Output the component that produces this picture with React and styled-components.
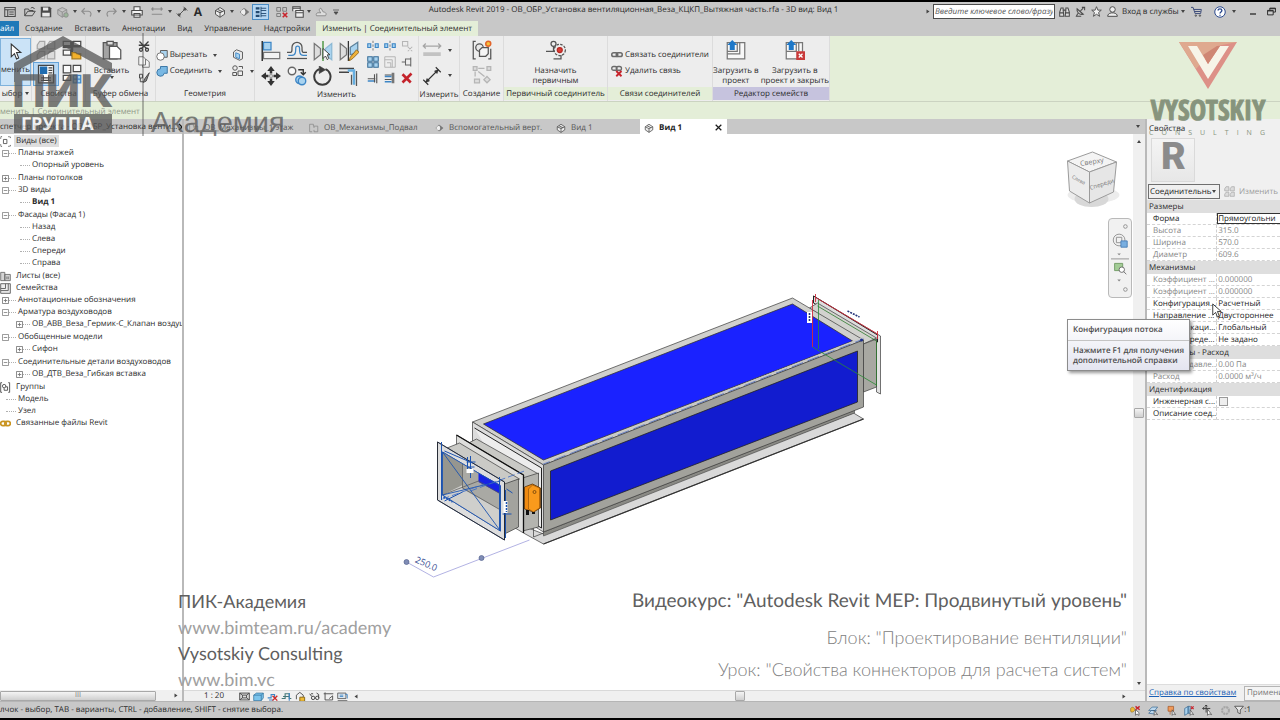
import React from 'react';
import styled, { createGlobalStyle } from 'styled-components';

const GlobalStyles = createGlobalStyle`
  * {
    box-sizing: border-box;
  }
  html {
    --grey: #c8c8c8;
    --green: #e4eed8;
    --panel: #ededed;
    --ink: #2b2b2b;
  }
  body {
    background: black;
    color: var(--ink);
    font-family: 'Open Sans', 'Noto Sans', sans-serif;
    font-size: 8px;
    line-height: 12px;
    margin: 0;
    overflow: hidden;
    text-rendering: geometricPrecision;
  }
  button, input, select {
    color: inherit;
    font: inherit;
    margin: 0;
    padding: 0;
    text-rendering: inherit;
  }
  ul {
    list-style: none;
    margin: 0;
    padding: 0;
  }
`;

const PageStyles = styled.div`
  background: white;
  border-bottom: 2px solid black;
  border-top: 2px solid black;
  display: flex;
  flex-direction: column;
  min-height: 100vh;
  overflow: hidden;
  position: relative;
`;

/* Icons, all drawn on a 16 unit grid */
const d = '#4a4a4a';
const b = '#3d86c6';
const lb = '#a9d3ef';
const g = '#b5b5b5';

const glyphs = {
  app: (
    <g fill="none" stroke={d} strokeWidth="1.4">
      <path d="M1 2h14v12H1zM1 5h14M5 5v9" />
      <path d="M7 8h6M7 11h6" />
    </g>
  ),
  open: (
    <path
      d="M1 13V4h5l1 2h5v2M1 13l4-6h10l-4 6zM9 3c2-2 4-1 5 1"
      fill="none"
      stroke={d}
      strokeWidth="1.3"
    />
  ),
  save: (
    <g>
      <path d="M1 1h12l2 2v12H1z" fill={d} />
      <path d="M4 2h7v4H4zM3 9h10v5H3z" fill="#e8e8e8" />
    </g>
  ),
  sync: (
    <g fill="#bcbcbc" stroke="#858585">
      <path d="M1 5l6-3 6 3v6l-6 4-6-4zM1 5l6 3 6-3M7 8v7" />
      <circle cx="12" cy="12" r="3" fill="#9cb59a" />
    </g>
  ),
  undo: (
    <path d="M5 3L1 7l4 4M1 7h9c4 0 4 5 2 7" fill="none" stroke="#8d8d8d" strokeWidth="1.5" />
  ),
  redo: (
    <path d="M11 3l4 4-4 4M15 7H6c-4 0-4 5-2 7" fill="none" stroke="#8d8d8d" strokeWidth="1.5" />
  ),
  print: (
    <g fill="#f4f4f4" stroke={d} strokeWidth="1.4">
      <path d="M4 1h8v5H4zM1 6h14v6H1zM4 10h8v5H4z" />
    </g>
  ),
  dim: (
    <g fill="none" stroke="#8a8a8a" strokeWidth="1.5">
      <path d="M1 4h14M3 2L1 4l2 2M13 2l2 2-2 2M1 11h14" />
    </g>
  ),
  measure: (
    <g fill={d} stroke={d} strokeWidth="1.2">
      <path d="M3 13L13 3M1 10l5 5M10 1l5 5" />
      <path d="M3 13l1-3 2 2zM13 3l-3 1 2 2z" />
    </g>
  ),
  cube: (
    <g fill="#ececec" stroke={d} strokeWidth="1.2">
      <path d="M2 6l6-4 6 4v5l-6 4-6-4zM2 6l6 3 6-3M8 9v6" />
      <path d="M5 4.500l6 3" />
    </g>
  ),
  section: (
    <g>
      <path d="M3 8l5-5 5 5-5 5z" fill="#eee" stroke="#777" strokeWidth="1.3" />
      <path d="M9 3l6 5-6 5z" fill="#777" />
      <circle cx="7" cy="8" r="3" fill="#eee" />
    </g>
  ),
  thin: (
    <g stroke="#234a70" fill="none">
      <path d="M1 3h5M1 8h5M1 13h5" strokeWidth="3" />
      <path d="M8 3h7M8 6h7M8 10h7M8 13h7M8 1v14" strokeWidth="1.2" />
    </g>
  ),
  closeWin: (
    <g fill="none" stroke="#777" strokeWidth="1.2">
      <path d="M1 2h5v5H1zM9 2h5v5H9zM1 10h5v4H1z" />
      <path d="M9 9l6 6M15 9l-6 6" stroke="#c8242c" strokeWidth="2.200" />
    </g>
  ),
  switchWin: (
    <g fill="#eee" stroke={d} strokeWidth="1.4">
      <path d="M1 7V1h10v4M1 3h10M5 6h10v9H5zM5 9h10" />
    </g>
  ),
  shape: (
    <path
      d="M2 13h12c2-3 0-5-3-5L8 3C4 3 6 8 8 9H4c-2 0-3 2-2 4z"
      fill="#ddd"
      stroke="#888"
      strokeWidth="1.2"
    />
  ),
  more: <path d="M2 4h12M4 8h8l-4 5z" fill={d} stroke={d} strokeWidth="1.5" />,
  binoculars: (
    <g fill="#ddd" stroke={d} strokeWidth="1.5">
      <path d="M3 3h3v3l1 9H1V9zM13 3h-3v3l-1 9h6V9z" />
      <path d="M6 6h4M1 10h6M9 10h6" />
    </g>
  ),
  dish: (
    <g fill="none" stroke={d} strokeWidth="1.5">
      <path d="M3 4c-1 5 3 9 9 8zM8 7l4-4M10 2h4v4M4 11l-2 4h7" />
    </g>
  ),
  star: (
    <path
      d="M8 1l2 5h5l-4 3.500 1.500 5.500L8 12l-4.500 3L5 9.500 1 6h5z"
      fill="#f2f2f2"
      stroke={d}
      strokeWidth="1.3"
    />
  ),
  user: (
    <g fill="#eee" stroke={d} strokeWidth="1.4">
      <path d="M1 15c0-3 2-4 5-5h4c3 1 5 2 5 5z" />
      <circle cx="8" cy="5" r="4" />
    </g>
  ),
  cart: (
    <g fill="none" stroke={d} strokeWidth="1.4">
      <path d="M0 2h3l3 9h8l1-6H4M5 8h9" stroke="#3a4a78" />
      <circle cx="7" cy="14" r="1" />
      <circle cx="13" cy="14" r="1" />
    </g>
  ),
  help: (
    <g>
      <circle cx="8" cy="8" r="7" fill="white" stroke="#27468c" strokeWidth="1.3" />
      <path
        d="M5.500 6c0-3 5-3 5 0 0 2-2.500 2-2.500 4M8 11.500v1.500"
        fill="none"
        stroke="#27468c"
        strokeWidth="1.800"
      />
    </g>
  ),
  min: <path d="M2 12h12" stroke="#222" strokeWidth="2.500" />,
  restore: (
    <g fill="none" stroke="#222" strokeWidth="1.6">
      <path d="M5 6V2h10v7h-4M1 6h10v8H1zM1 7h10M5 3h10" />
    </g>
  ),
  pointer: <path d="M4 1v12l3-3 2 5 2-1-2-5h4z" fill="white" stroke="#333" />,
  types: (
    <g fill="#dcdcdc" stroke="#a6a6a6">
      <path d="M1 4l2-3h4v6H1zM9 4l2-3h4v6H9zM1 12l2-3h4v6H1zM9 12l2-3h4v6H9z" />
    </g>
  ),
  typeProps: (
    <g stroke={d} fill="#f7f7f7">
      <path d="M1 1h6v5H1zM9 1h6v4H9zM1 8h6v4H1z" />
      <path d="M1 5h14M8 1v12" strokeWidth="2" />
      <path d="M8 10h3l1 1h3v4H8z" fill="#f2b12c" stroke="#a77a1c" />
    </g>
  ),
  props: (
    <g>
      <path d="M2 1h12v14H2z" fill="white" stroke="#444" />
      <path d="M3 2h6v6H3z" fill="#1f6cb0" />
      <path d="M10 3h3M10 5h3M10 7h3M4 11h8M4 13h8" stroke="#444" />
      <path d="M6 9v5M10 9v5" stroke="#444" strokeWidth=".7" />
    </g>
  ),
  family: (
    <g stroke={d} fill="#fafafa">
      <path d="M1 1h6v6H1zM9 1h6v5H9zM1 9h6v4H1z" />
      <path d="M9 9h6v6H9z" fill={lb} stroke={b} />
      <path d="M12 9v6M9 12h6" stroke={b} />
    </g>
  ),
  paste: (
    <g stroke="#555">
      <path d="M1 2h11v13H1z" fill="#a3a3a3" />
      <path d="M4 1h5v3H4z" fill="#ddd" />
      <path d="M6 5h6l3 3v7H6z" fill="white" />
    </g>
  ),
  cut: (
    <g fill="none" stroke="#3d3d3d" strokeWidth="1.7">
      <path d="M2 2l9 9M14 2l-9 9M1 7h14" />
      <circle cx="4" cy="13" r="2" />
      <circle cx="12" cy="13" r="2" />
    </g>
  ),
  copyClip: (
    <path
      d="M1 1h6l3 3v8H1zM10 5h2l3 3v7H6v-3"
      fill="#f5f5f5"
      stroke="#777"
      strokeWidth="1.3"
    />
  ),
  match: (
    <g stroke={d} strokeWidth="1.3">
      <path d="M2 3h4v5H2zM3 8v5h4" fill="#ddd" />
      <path d="M15 1L9 9l-2 5 4-2z" fill="#888" />
    </g>
  ),
  cutGeom: (
    <g strokeWidth="1.2">
      <path d="M6 2h9v9H6z" fill={lb} stroke="#555" />
      <circle cx="6" cy="10" r="5" fill="white" stroke="#666" />
    </g>
  ),
  joinGeom: (
    <path
      d="M6 2h9v9h-4a5 5 0 1 1-5-6z"
      fill="#79b8e3"
      stroke="#3b76a5"
      strokeWidth="1.3"
    />
  ),
  wall: (
    <g stroke="#555" strokeWidth="1.2">
      <path d="M2 4l4-3 8 3v9l-4 2-8-4z" fill="#e8e8e8" />
      <path d="M5 5l5 2v6l-5-2z" fill={lb} stroke={b} />
    </g>
  ),
  cope: (
    <g fill="#eee" stroke="#555" strokeWidth="1.3">
      <circle cx="4" cy="4" r="3" />
      <path d="M8 8h6v6H8zM1 10h5v4H1zM9 2h5v3" />
    </g>
  ),
  align: (
    <g>
      <path d="M1 0v16" stroke="#333" strokeWidth="1.2" />
      <path d="M2 1h6v6H2z" fill={lb} stroke={b} />
      <path d="M2 9h13v5H2z" fill="#f3f3f3" stroke="#777" />
    </g>
  ),
  offset: (
    <g fill="none">
      <path d="M0 9h3c1 0 1-1 1-4a4 4 0 0 1 8 0c0 3 0 4 1 4h3" stroke="#555" />
      <path d="M0 14h16" stroke="#555" />
      <path d="M1 11.500h3c3 0 3-3 3-6a1.500 1.500 0 0 1 3 0c0 3 0 6 3 6h3" stroke={b} />
    </g>
  ),
  mirrorPick: (
    <g>
      <path d="M1 2l5 4v5l-5 4z" fill="#ddd" stroke="#777" />
      <path d="M15 2l-5 4v5l5 4z" fill={lb} stroke="#8db9d5" />
      <path d="M8 0v16" stroke="#509848" strokeWidth="1.2" />
      <path d="M8 6v8l2-2 1.500 3 1-1-1-3h2z" fill="white" stroke="#333" strokeWidth=".7" />
    </g>
  ),
  mirrorDraw: (
    <g>
      <path d="M1 2l5 4v5l-5 4z" fill="#ddd" stroke="#777" />
      <path d="M15 1l-6 4v6l6-2z" fill={lb} stroke="#5b7f99" />
      <path d="M7.500 0v16" stroke="#333" />
      <path d="M14 7l-5 6-1 3 3-2 5-5z" fill="#f0b33a" stroke="#8a6420" strokeWidth=".7" />
    </g>
  ),
  move: (
    <g fill="#333">
      <path d="M8 0l3 4H9v2H7V4H5zM8 16l3-4H9v-2H7v2H5zM0 8l4-3v2h2v2H4v2zM16 8l-4-3v2h-2v2h2v2z" />
      <path d="M7 7h2v2H7z" fill="white" stroke="#666" strokeWidth=".6" />
    </g>
  ),
  copy: (
    <g fill="none" strokeWidth="1.1">
      <circle cx="4" cy="4" r="3" fill="#f8f8f8" stroke="#666" />
      <circle cx="10" cy="11" r="3" fill={lb} stroke={b} />
      <circle cx="12" cy="12" r="3" fill={lb} stroke={b} />
      <path d="M9 3h4v3M11 5l2 2 2-2" stroke="#333" />
    </g>
  ),
  rotate: (
    <g fill="none" stroke="#3c3c3c" strokeWidth="1.6">
      <path d="M5 2.500a6.500 6.500 0 1 0 5 0" />
      <path d="M5 0l5 3-5 3z" fill="#3c3c3c" strokeWidth=".5" />
    </g>
  ),
  trim: (
    <g fill="none">
      <path d="M0 2h12M0 5h8" stroke="#444" strokeWidth="1.2" />
      <path d="M7 3.500h5V15" stroke="#65aee0" strokeWidth="2" />
      <path d="M14 4v12M10 7v8" stroke="#555" />
    </g>
  ),
  split: (
    <g stroke={b} strokeWidth="1.5" fill={lb}>
      <path d="M1 5h4v5H1zM11 5h4v5h-4z" />
      <path d="M8 1v14" stroke="#888" strokeDasharray="3 2" />
    </g>
  ),
  array: (
    <path
      d="M1 1h6v6H1zM9 1h6v6H9zM1 9h6v6H1zM9 9h6v6H9z"
      fill={lb}
      stroke="#376c96"
      strokeWidth="1.4"
    />
  ),
  scale: <path d="M1 1h14v14H1zM1 5h10v10M4 9h5v6" fill="none" stroke={g} strokeWidth="1.3" />,
  pin: <path d="M1 8h5M6 4v8h7V4zM13 2v12" fill="#eee" stroke="#666" strokeWidth="1.4" />,
  unpin: <path d="M2 2h7v6H2zM9 9l6 6M15 9l-6 6" fill="none" stroke={g} strokeWidth="1.4" />,
  trimOne: (
    <g fill="none" stroke="#555" strokeWidth="1.5">
      <path d="M1 9h10M13 2v13" />
      <path d="M1 12h10" stroke={b} strokeWidth="2" />
      <path d="M10 3v11" />
    </g>
  ),
  trimMany: (
    <g fill="none" stroke="#555" strokeWidth="1.4">
      <path d="M1 4h9M1 10h9M13 1v14M11 1v14" />
      <path d="M1 6h9M1 13h9" stroke={b} strokeWidth="2" />
    </g>
  ),
  del: <path d="M2 3l11 11M14 2L2 14" stroke="#c4232b" strokeWidth="3.500" />,
  dimGrey: (
    <g stroke="#a5a5a5" fill="#c2c2c2">
      <path d="M1 4h14M3 2L1 4l2 2M13 2l2 2-2 2" fill="none" />
      <path d="M1 9h14v3H1z" stroke="none" />
    </g>
  ),
  dimLine: (
    <g stroke="#333" fill="#333">
      <path d="M3 13L13 3M1 11l4 4M11 1l4 4" fill="none" strokeWidth=".9" />
      <path d="M3 13l1-3 2 2zM13 3l-3 1 2 2z" strokeWidth=".5" />
    </g>
  ),
  create: (
    <g fill="none" stroke="#555">
      <path d="M3 1H1v14h2M13 15h2V7" />
      <circle cx="6" cy="6" r="3" fill="#e9e9e9" />
      <path d="M8 6h5v5l-2 2H6V8z" fill="#f5f5f5" />
      <circle cx="13" cy="3" r="2" fill="#f6c13a" stroke="#e2642a" strokeWidth="1.200" />
    </g>
  ),
  group: (
    <g fill="#ddd" stroke={g}>
      <path d="M1 2h3v3H1zM12 2h3v3h-3zM2 12h4v3H2zM12 10l2.500 2.500-2.500 2.500-2.500-2.500z" />
      <path d="M5 3.500h5M2.500 6v4M5 6l5 4" fill="none" />
    </g>
  ),
  primary: (
    <g fill="none" stroke="#555">
      <circle cx="6" cy="3" r="2" />
      <path d="M6 5v4H0M6 15h6v-3" />
      <circle cx="11" cy="8" r="4.500" strokeDasharray="2 1" />
      <circle cx="11" cy="8" r="2" fill="#dc3c35" stroke="#b42a24" />
    </g>
  ),
  link: (
    <g fill="none" stroke="#6b6b6b" strokeWidth="2">
      <rect x="1" y="5" width="8" height="5" rx="2.500" />
      <rect x="7" y="5" width="8" height="5" rx="2.500" />
    </g>
  ),
  unlink: (
    <g fill="none" stroke="#6b6b6b" strokeWidth="1.800">
      <rect x="1" y="2" width="7" height="5" rx="2.500" />
      <rect x="7" y="2" width="7" height="5" rx="2.500" />
      <path d="M7 8l7 7M14 8l-7 7" stroke="#c8242c" strokeWidth="2.500" />
    </g>
  ),
  load: (
    <g>
      <path d="M1 2h14v13H1z" fill="#f8f8f8" stroke="#777" />
      <path d="M9 2v7H1M11 2v9H1" fill="none" stroke="#777" />
      <path d="M5 0l4 4H7v4H3V4H1z" fill="#1e78c8" />
    </g>
  ),
  loadClose: (
    <g>
      <path d="M1 2h13v13H1z" fill="#f8f8f8" stroke="#777" />
      <path d="M9 2v7H1M11 2v7" fill="none" stroke="#777" />
      <path d="M5 0l4 4H7v4H3V4H1z" fill="#1e78c8" />
      <path d="M9 9h7v7H9z" fill="#c93a3a" />
      <path d="M11 11l3 3M14 11l-3 3" stroke="white" />
    </g>
  ),
  plan: <path d="M1 2h6v3h7v9H8v-3M1 2v12h4M8 5v3" fill="none" stroke="#888" strokeWidth="1.2" />,
  x: <path d="M3 3l10 10M13 3L3 13" stroke="#1c1c1c" strokeWidth="2.200" />,
  plus: <path d="M1 1h14v14H1zM4 8h8M8 4v8" fill="white" stroke="#777" strokeWidth="2" />,
  minus: <path d="M1 1h14v14H1zM4 8h8" fill="white" stroke="#888" strokeWidth="2" />,
  views: (
    <g fill="none" stroke="#555" strokeWidth="1.3">
      <path d="M1 4V1h3M12 1h3v3M1 12v3h3M12 15h3v-3" strokeDasharray="2 1" />
      <path d="M5 5h5v6H5z" />
    </g>
  ),
  sheets: (
    <g fill="#d5d5d5" stroke="#666" strokeWidth="1.2">
      <path d="M1 2h6v12H1zM7 5h8v9H7zM10 8v4M12 8v4" />
    </g>
  ),
  families: <path d="M1 1h14v14H1zM8 1v7H1M12 1v10H1" fill="#eee" stroke="#666" strokeWidth="1.4" />,
  groups: (
    <g fill="none" stroke="#555" strokeWidth="1.4">
      <path d="M3 1H1v14h2M12 1h2v14h-2" />
      <circle cx="6" cy="6" r="2.500" />
      <path d="M8 7h3v5H6V9" />
    </g>
  ),
  links: (
    <g fill="none" stroke="#c99420" strokeWidth="2.500">
      <rect x="1" y="5" width="8" height="6" rx="3" />
      <rect x="7" y="5" width="8" height="6" rx="3" />
    </g>
  ),
  detail: (
    <g fill="#ddd" stroke="#444" strokeWidth="1.3">
      <path d="M1 3h14v10H1zM5 6h6v4H5zM1 3l4 3M15 3l-4 3M1 13l4-3M15 13l-4-3" />
    </g>
  ),
  visual: <path d="M1 6l4-3h10v7l-3 4H1zM1 6h11v8M12 6l3-3" fill="#7cc4ec" stroke="#2c6c98" />,
  sunOff: (
    <g fill="none" stroke={b} strokeWidth="1.6">
      <path d="M1 10h5V5h5v5M3 13h6" />
      <path d="M8 7l7 7M15 7l-7 7" stroke="#cf2a2a" strokeWidth="2" />
    </g>
  ),
  crop: (
    <g fill="none" stroke="#477" strokeWidth="1.6">
      <path d="M1 11h5V4h6v7h3M3 8h9" />
      <path d="M12 3v11" stroke={b} />
    </g>
  ),
  lock: (
    <g strokeWidth="1.4">
      <path d="M2 12V6l5-4 5 4v3" fill="none" stroke="#555" />
      <path d="M7 9h7v6H7z" fill="#f0bb35" stroke="#8c6a18" />
    </g>
  ),
  glasses: (
    <g fill="none" stroke="#444" strokeWidth="1.4">
      <path d="M1 4l3 4M3 4h3M14 10V5l-3-2" />
      <circle cx="6" cy="10" r="2.500" />
      <circle cx="12" cy="10" r="2.500" />
    </g>
  ),
  reveal: <path d="M1 4h14M3 2v11h11V7L9 11" fill="none" stroke="#555" strokeWidth="1.4" />,
  screen: (
    <g stroke="#555" strokeWidth="1.2">
      <path d="M1 3h12v8H1zM1 14h14" fill="#dde6ee" />
      <path d="M4 6h5M4 8h5M12 5h3v6" fill="none" stroke={b} />
    </g>
  ),
  selLinks: (
    <g>
      <path d="M1 5c3-4 6 0 6 2s-5 5-6 2z" fill="#f0bb35" stroke="#9a7418" />
      <path d="M8 2l6 5M14 2L8 7" stroke="#c8242c" strokeWidth="2" />
      <path d="M8 7v8l2-2 3 2 0-4z" fill="white" stroke="#444" />
    </g>
  ),
  selUnder: (
    <g>
      <path d="M1 8l5-5h8l-4 5zM1 12l4-4h7l-3 5z" fill="#bcd8ee" stroke="#35658f" />
      <path d="M9 8v7l2-2 3 1z" fill="white" stroke="#444" />
    </g>
  ),
  selPin: (
    <g>
      <path d="M3 2h8v7H3zM6 9v5" fill="#f09a5a" stroke="#a05220" />
      <path d="M9 7v8l2-2 3 1z" fill="white" stroke="#444" />
    </g>
  ),
  selFace: (
    <g>
      <path d="M1 5l5-3v10l-5 3zM6 2h3v10H6z" fill={lb} stroke="#35658f" />
      <path d="M10 2l4 4M14 2l-4 4" stroke="#c8242c" strokeWidth="1.800" />
      <path d="M9 7v8l2-2 3 1z" fill="white" stroke="#444" />
    </g>
  ),
  drag: (
    <g>
      <path d="M6 0v11M1 5h11M4 2l2-2 2 2M3 3L1 5l2 2" stroke="#333" fill="none" strokeWidth="1.3" />
      <path d="M8 6v9l2-2 4 1z" fill="white" stroke="#444" />
    </g>
  ),
  gear: (
    <circle cx="8" cy="8" r="5" fill="none" stroke="#a5a5a5" strokeWidth="3" strokeDasharray="3 1" />
  ),
  filter: <path d="M1 2h14l-5 6v6l-4-2V8z" fill="#e8e8e8" stroke="#444" strokeWidth="1.3" />,
};

const IconStyles = styled.svg`
  display: block;
  flex: none;
  height: ${(props) => props.$size}px;
  width: ${(props) => props.$size}px;
`;

function Icon({ name, size = 12 }) {
  return (
    <IconStyles $size={size} viewBox="0 0 16 16" aria-hidden="true">
      {glyphs[name]}
    </IconStyles>
  );
}

const Arrow = styled.i`
  border: 2px solid transparent;
  border-bottom-width: 0;
  border-top: 3px solid #444;
  flex: none;
  height: 0;
  width: 0;
  transform: rotate(${(props) => props.$turn || 0}deg);
`;

/* Title bar */
const TitleBar = styled.header`
  align-items: center;
  background: var(--grey);
  display: flex;
  height: 19px;
  padding-left: 2px;
  h1 {
    align-self: flex-start;
    flex: 1;
    font-size: 8px;
    font-weight: 400;
    line-height: 15px;
    margin: 0;
    text-align: center;
    white-space: nowrap;
  }
`;

const ToolButton = styled.button`
  align-items: center;
  background: ${(props) => (props.$on ? '#b5d6f2' : 'transparent')};
  border: ${(props) => (props.$on ? '1px solid #4a8cc4' : '0')};
  display: flex;
  flex: none;
  font-size: 12px;
  font-weight: 700;
  height: 16px;
  justify-content: center;
  width: ${(props) => props.$w || 16}px;
`;

const Space = styled.span`
  flex: none;
  width: ${(props) => props.$w}px;
`;

const SearchBox = styled.input`
  background: white;
  border: 1px solid #4c4c4c;
  font-style: italic;
  height: 15px;
  margin-left: 3px;
  padding: 0 1px;
  width: 122px;
  &::placeholder {
    color: #555;
    opacity: 1;
  }
`;

const SignIn = styled.button`
  align-items: center;
  background: none;
  border: 0;
  display: flex;
  gap: 2px;
  white-space: nowrap;
  width: 64px;
`;

const quickTools = [
  ['app', 16],
  [null, 4],
  ['open', 16],
  ['save', 16],
  ['sync', 18],
  ['arrow', 6],
  ['undo', 18],
  ['arrow', 6],
  ['redo', 18],
  ['arrow', 8],
  ['print', 18],
  [null, 2],
  ['dim', 18],
  ['arrow', 7],
  ['measure', 18],
  ['text', 14],
  [null, 5],
  ['cube', 19],
  ['arrow', 6],
  ['section', 17],
  ['thin', 17],
  [null, 5],
  ['closeWin', 16],
  ['switchWin', 16],
  ['arrow', 5],
  ['shape', 20],
  ['more', 10],
];

function toolFace(name) {
  if (name === 'arrow') return <Arrow />;
  if (name === 'text') return 'A';
  return <Icon name={name} size={name === 'more' ? 8 : 12} />;
}

function Title() {
  return (
    <TitleBar>
      {quickTools.map(([name, w], i) =>
        name ? (
          <ToolButton key={i} $w={w} $on={name === 'thin'} aria-label={name}>
            {toolFace(name)}
          </ToolButton>
        ) : (
          <Space key={i} $w={w} />
        )
      )}
      <h1>
        Autodesk Revit 2019 - ОВ_ОБР_Установка вентиляционная_Веза_КЦКП_Вытяжная часть.rfa - 3D
        вид: Вид 1
      </h1>
      <Arrow $turn={-90} />
      <SearchBox placeholder="Введите ключевое слово/фразу" aria-label="Поиск" />
      <Space $w={1} />
      {['binoculars', 'dish', 'star', 'user'].map((name) => (
        <ToolButton key={name} aria-label={name}>
          <Icon name={name} size={11} />
        </ToolButton>
      ))}
      <Space $w={2} />
      <SignIn>
        Вход в службы <Arrow />
      </SignIn>
      <ToolButton $w={20} aria-label="cart">
        <Icon name="cart" size={11} />
      </ToolButton>
      <Space $w={4} />
      <ToolButton $w={20} aria-label="help">
        <Icon name="help" />
      </ToolButton>
      <ToolButton $w={8} aria-label="help menu">
        <Arrow />
      </ToolButton>
      <Space $w={6} />
      <ToolButton $w={18} aria-label="minimize">
        <Icon name="min" size={8} />
      </ToolButton>
      <ToolButton $w={18} aria-label="restore">
        <Icon name="restore" size={9} />
      </ToolButton>
    </TitleBar>
  );
}

/* Ribbon */
const TabRow = styled.nav`
  background: var(--grey);
  display: flex;
  height: 15px;
`;

const RibbonTab = styled.button`
  background: ${(props) => props.$bg || 'transparent'};
  border: 0;
  color: ${(props) => (props.$light ? 'white' : 'inherit')};
  line-height: 15px;
  padding: ${(props) => (props.$light ? '0 5px 0 0' : '0 6px')};
  white-space: nowrap;
`;

const RibbonStyles = styled.section`
  background: var(--green);
  border-bottom: 1px solid #cbd3c1;
  display: flex;
  height: 66px;
`;

const PanelStyles = styled.div`
  background: var(--panel);
  border-right: 1px solid #dcdcdc;
  display: flex;
  flex: none;
  flex-direction: column;
  width: ${(props) => props.$w}px;
  footer {
    align-items: center;
    background: ${(props) => props.$foot || 'transparent'};
    display: flex;
    gap: 3px;
    height: 13px;
    justify-content: center;
    line-height: 14px;
    margin-bottom: 1px;
    white-space: nowrap;
  }
`;

const PanelBody = styled.div`
  align-items: flex-start;
  display: flex;
  flex: 1;
  gap: ${(props) => props.$gap || 0}px;
  justify-content: center;
  padding: 2px 0 0 ${(props) => props.$pad || 0}px;
`;

const BigButton = styled.button`
  align-items: center;
  background: ${(props) => (props.$on ? '#cbe3f7' : 'transparent')};
  border: ${(props) => (props.$on ? '1px solid #7fb2dc' : '0')};
  display: flex;
  flex-direction: column;
  height: 48px;
  line-height: 10px;
  padding-top: ${(props) => (props.$on ? 4 : 2)}px;
  white-space: nowrap;
  svg {
    margin-bottom: ${(props) => (props.$on ? 5 : 6)}px;
  }
`;

const IconGrid = styled.div`
  display: grid;
  flex: none;
  grid-auto-rows: ${(props) => props.$row}px;
  grid-template-columns: repeat(${(props) => props.$cols}, ${(props) => props.$col}px);
`;

const GridButton = styled.button`
  align-items: center;
  background: ${(props) => (props.$on ? '#b9d9f4' : 'transparent')};
  border: ${(props) => (props.$on ? '1px solid #66a3d8' : '0')};
  display: flex;
  justify-content: center;
`;

const RowList = styled.div`
  display: flex;
  flex-direction: column;
  gap: 4px;
  padding-top: 11px;
`;

const RowButton = styled.button`
  align-items: center;
  background: none;
  border: 0;
  display: flex;
  gap: 2px;
  height: 12px;
  line-height: 14px;
  white-space: nowrap;
  i {
    margin-left: 4px;
  }
`;

const OptionsBar = styled.div`
  background: var(--green);
  color: #8f9788;
  height: 17px;
  line-height: 19px;
`;

function Panel({ title, w, foot, gap, pad, menu, children }) {
  return (
    <PanelStyles $w={w} $foot={foot}>
      <PanelBody $gap={gap} $pad={pad}>
        {children}
      </PanelBody>
      <footer>
        {title} {menu && <Arrow />}
      </footer>
    </PanelStyles>
  );
}

function Grid({ names, cols, col, row, size, on }) {
  return (
    <IconGrid $cols={cols} $col={col} $row={row}>
      {names.map((name, i) => (
        <GridButton key={i} $on={name === on} aria-label={name}>
          {name === 'arrow' ? <Arrow /> : <Icon name={name} size={size} />}
        </GridButton>
      ))}
    </IconGrid>
  );
}

function Ribbon() {
  return (
    <>
      <TabRow>
        <RibbonTab $bg="#1f79b8" $light>
          айл
        </RibbonTab>
        <RibbonTab>Создание</RibbonTab>
        <RibbonTab>Вставить</RibbonTab>
        <RibbonTab>Аннотации</RibbonTab>
        <RibbonTab>Вид</RibbonTab>
        <RibbonTab>Управление</RibbonTab>
        <RibbonTab>Надстройки</RibbonTab>
        <RibbonTab $bg="#e4eed8">Изменить | Соединительный элемент</RibbonTab>
      </TabRow>
      <RibbonStyles>
        <Panel title="ыбор" w={32} menu>
          <BigButton $on>
            <Icon name="pointer" size={17} />
            менить
          </BigButton>
        </Panel>
        <Panel title="Свойства" w={54}>
          <Grid
            names={['types', 'typeProps', 'props', 'family']}
            cols={2}
            col={26}
            row={24}
            size={20}
            on="props"
          />
        </Panel>
        <Panel title="Буфер обмена" w={70} gap={8} pad={4}>
          <BigButton>
            <Icon name="paste" size={20} />
            Вставить
            <Arrow />
          </BigButton>
          <Grid names={['cut', 'copyClip', 'match']} cols={1} col={14} row={16} size={12} />
        </Panel>
        <Panel title="Геометрия" w={99} gap={10}>
          <RowList>
            <RowButton>
              <Icon name="cutGeom" /> Вырезать <Arrow />
            </RowButton>
            <RowButton>
              <Icon name="joinGeom" /> Соединить <Arrow />
            </RowButton>
          </RowList>
          <RowList>
            <RowButton aria-label="wall">
              <Icon name="wall" />
            </RowButton>
            <RowButton aria-label="cope">
              <Icon name="cope" /> <Arrow />
            </RowButton>
          </RowList>
        </Panel>
        <Panel title="Изменить" w={164} gap={3}>
          <Grid
            names={['align', 'offset', 'mirrorPick', 'mirrorDraw', 'move', 'copy', 'rotate', 'trim']}
            cols={4}
            col={26}
            row={25}
            size={20}
          />
          <Grid
            names={[
              'split',
              'split',
              'unpin',
              'array',
              'scale',
              'pin',
              'trimOne',
              'trimMany',
              'del',
            ]}
            cols={3}
            col={17}
            row={16}
            size={12}
          />
        </Panel>
        <Panel title="Измерить" w={41} pad={4}>
          <Grid names={['dimGrey', 'arrow', 'dimLine', 'arrow']} cols={2} col={18} row={25} size={20} />
        </Panel>
        <Panel title="Создание" w={44}>
          <Grid names={['create', 'group']} cols={1} col={24} row={24} size={20} />
        </Panel>
        <Panel title="Первичный соединитель" w={104} foot="#e4eed8">
          <BigButton>
            <Icon name="primary" size={20} />
            <span>Назначить</span>
            <span>первичным</span>
          </BigButton>
        </Panel>
        <Panel title="Связи соединителей" w={105} foot="#e4eed8">
          <RowList>
            <RowButton>
              <Icon name="link" /> Связать соединители
            </RowButton>
            <RowButton>
              <Icon name="unlink" /> Удалить связь
            </RowButton>
          </RowList>
        </Panel>
        <Panel title="Редактор семейств" w={117} foot="#c6c3de" gap={2}>
          <BigButton>
            <Icon name="load" size={20} />
            <span>Загрузить в</span>
            <span>проект</span>
          </BigButton>
          <BigButton>
            <Icon name="loadClose" size={20} />
            <span>Загрузить в</span>
            <span>проект и закрыть</span>
          </BigButton>
        </Panel>
      </RibbonStyles>
      <OptionsBar>менить | Соединительный элемент</OptionsBar>
    </>
  );
}

/* Project browser */
const Workspace = styled.main`
  display: flex;
  flex: 1;
  min-height: 0;
`;

const BrowserStyles = styled.aside`
  border-right: 2px solid #b9b9b9;
  display: flex;
  flex: none;
  flex-direction: column;
  overflow: hidden;
  width: 184px;
  > header {
    align-items: center;
    background: var(--grey);
    display: flex;
    height: 15px;
    justify-content: space-between;
    line-height: 19px;
    padding-right: 2px;
    white-space: nowrap;
  }
`;

const Tree = styled.ul`
  flex: 1;
  padding-top: 1px;
  white-space: nowrap;
  ul {
    padding-left: 2px;
  }
  ul ul {
    margin-bottom: 1px;
    padding-left: 14px;
  }
`;

const TreeRow = styled.div`
  align-items: center;
  display: flex;
  font-weight: ${(props) => (props.$bold ? 700 : 400)};
  gap: ${(props) => (props.$top ? 3 : 0)}px;
  height: 12px;
  span {
    background: ${(props) => (props.$picked ? '#dedede' : 'transparent')};
    padding: 0 2px;
  }
`;

const Toggle = styled.button`
  background: none;
  border: 0;
  flex: none;
`;

const Dash = styled.i`
  border-top: 1px dotted #b0b0b0;
  flex: none;
  margin-left: ${(props) => (props.$alone ? 4 : 0)}px;
  width: ${(props) => (props.$alone ? 10 : 7)}px;
`;

const tree = [
  {
    icon: 'views',
    label: 'Виды (все)',
    picked: true,
    items: [
      { label: 'Планы этажей', sign: 'minus', items: [{ label: 'Опорный уровень' }] },
      { label: 'Планы потолков', sign: 'plus' },
      { label: '3D виды', sign: 'minus', items: [{ label: 'Вид 1', bold: true }] },
      {
        label: 'Фасады (Фасад 1)',
        sign: 'minus',
        items: [
          { label: 'Назад' },
          { label: 'Слева' },
          { label: 'Спереди' },
          { label: 'Справа' },
        ],
      },
    ],
  },
  { icon: 'sheets', label: 'Листы (все)' },
  {
    icon: 'families',
    label: 'Семейства',
    items: [
      { label: 'Аннотационные обозначения', sign: 'plus' },
      {
        label: 'Арматура воздуховодов',
        sign: 'minus',
        items: [{ label: 'ОВ_АВВ_Веза_Гермик-С_Клапан воздушный', sign: 'plus' }],
      },
      { label: 'Обобщенные модели', sign: 'minus', items: [{ label: 'Сифон', sign: 'plus' }] },
      {
        label: 'Соединительные детали воздуховодов',
        sign: 'minus',
        items: [{ label: 'ОВ_ДТВ_Веза_Гибкая вставка', sign: 'plus' }],
      },
    ],
  },
  { icon: 'groups', label: 'Группы', items: [{ label: 'Модель' }, { label: 'Узел' }] },
  { icon: 'links', label: 'Связанные файлы Revit' },
];

function TreeNode({ node }) {
  return (
    <li>
      <TreeRow $top={!!node.icon} $bold={node.bold} $picked={node.picked}>
        {node.icon && <Icon name={node.icon} size={11} />}
        {node.sign && (
          <Toggle aria-label={node.sign}>
            <Icon name={node.sign} size={7} />
          </Toggle>
        )}
        {!node.icon && <Dash $alone={!node.sign} />}
        <span>{node.label}</span>
      </TreeRow>
      {node.items && (
        <ul>
          {node.items.map((item) => (
            <TreeNode key={item.label} node={item} />
          ))}
        </ul>
      )}
    </li>
  );
}

const ScrollRow = styled.div`
  align-items: center;
  background: #f0f0f0;
  display: flex;
  flex: ${(props) => (props.$fill ? 1 : 'none')};
  height: 11px;
  justify-content: space-between;
  padding: 0 4px 0 ${(props) => (props.$fill ? 4 : 0)}px;
`;

const Thumb = styled.span`
  background: linear-gradient(#f4f4f4, #cfcfcf);
  border: 1px solid #a8a8a8;
  border-radius: 1px;
  color: #777;
  font-size: 7px;
  height: 10px;
  line-height: 8px;
  text-align: center;
  width: ${(props) => props.$w}px;
`;

function Browser() {
  return (
    <BrowserStyles>
      <header>
        спетчер проекта - ОВ_ОБР_Установка венти...
        <Icon name="x" size={10} />
      </header>
      <Tree>
        {tree.map((node) => (
          <TreeNode key={node.label} node={node} />
        ))}
      </Tree>
      <ScrollRow>
        <Thumb $w={156}>III</Thumb>
        <Arrow $turn={-90} />
      </ScrollRow>
    </BrowserStyles>
  );
}

/* Drawing area */
const ViewStyles = styled.section`
  display: flex;
  flex: 1;
  flex-direction: column;
  min-width: 0;
`;

const DocTabs = styled.nav`
  align-items: center;
  background: var(--grey);
  display: flex;
  height: 15px;
  padding-right: 5px;
  > i {
    margin-left: auto;
  }
`;

const DocTab = styled.button`
  align-items: center;
  background: ${(props) => (props.$active ? 'white' : 'transparent')};
  border: 0;
  color: ${(props) => (props.$active ? '#222' : '#555')};
  display: flex;
  font-weight: ${(props) => (props.$active ? 700 : 400)};
  gap: 5px;
  height: 15px;
  line-height: 14px;
  padding: 2px 4px 0 ${(props) => (props.$active ? 4 : 5)}px;
  white-space: nowrap;
  width: ${(props) => props.$w}px;
  span {
    flex: 1;
    text-align: left;
  }
`;

const Stage = styled.div`
  display: flex;
  flex: 1;
  min-height: 0;
  position: relative;
  > svg {
    display: block;
    flex: 1;
    height: 556px;
    min-width: 0;
  }
`;

const VScroll = styled.div`
  align-items: center;
  background: #f0f0f0;
  display: flex;
  flex: none;
  flex-direction: column;
  justify-content: space-between;
  padding: 6px 0 5px;
  width: 12px;
`;

const NavBar = styled.div`
  background: #f1f1f1;
  border: 1px solid #b9b9b9;
  border-radius: 4px;
  height: 80px;
  padding: 2px;
  position: absolute;
  right: 13px;
  top: 84px;
  width: 24px;
  svg {
    display: block;
    height: 100%;
    width: 100%;
  }
`;

const ViewBar = styled.footer`
  align-items: center;
  background: #f0f0f0;
  border-top: 1px solid #d9d9d9;
  display: flex;
  height: 11px;
  padding: 0 15px 0 20px;
  > span {
    flex: none;
    width: 34px;
  }
`;

const ViewTool = styled.button`
  background: none;
  border: 0;
  flex: none;
  padding: 0 1px;
  width: 14px;
`;

const edge = { stroke: '#3a3a3a', strokeWidth: 0.7 };

function Model() {
  return (
    <g strokeLinejoin="round">
      {/* far flange and duct */}
      <path d="M813 296l67 40v58l-4-2v-52l-63-37z" fill="#e2e2e2" {...edge} />
      <path d="M813 296l64 39v7l-64-39z" fill="#dedede" stroke="#222" strokeWidth="1" />
      <path d="M809 308l8-5 59 35-13 6z" fill="#d2d2ce" {...edge} />
      <path d="M863 344l13-5v48l-13 5z" fill="#a8a8a2" {...edge} />
      <path d="M817 306l59 35v45" fill="none" stroke="#2d7a2d" strokeWidth=".8" />
      {/* base rail */}
      <path d="M523 526l20 8 310-121 10 6-320 125-20-11z" fill="#d9d9d9" {...edge} />
      <path d="M543 544l320-125" stroke="#333" strokeWidth="1.2" />
      <path d="M543 532l311-122v3L543 536z" fill="#8a8a85" stroke="#444" strokeWidth=".6" />
      <path d="M533 527v10l10-4" fill="none" {...edge} />
      {/* body top */}
      <path d="M472 422l320-124 71 42-320 125z" fill="#d0d0cd" {...edge} />
      <path d="M483 424l309-120 60 37-309 119z" fill="#1a22ff" stroke="#333" strokeWidth=".8" />
      {/* body front */}
      <path d="M543 465l320-125v67L543 532z" fill="#a2a29c" {...edge} />
      <path d="M550 471l307-120v51L550 520z" fill="#121ccf" stroke="#222" strokeWidth=".8" />
      <path d="M543 463l320-125" stroke="#c9c9c9" strokeWidth="2" />
      <path d="M538 466l325-127" stroke="#4a68b8" strokeWidth=".8" strokeDasharray="12 5" />
      {/* body near end */}
      <path d="M472 422l71 43v67l-71-44z" fill="#dcdcdc" {...edge} />
      <path d="M474 428l67 40v60l-13-8" fill="#ededed" stroke="#222" strokeWidth="1" />
      {/* duct between end and plate */}
      <path d="M462 446l14-7 62 35-13 6z" fill="#c9c9c5" {...edge} />
      <path d="M522 478l16-5v54l-16 4z" fill="#b4b4af" {...edge} />
      {/* middle plate */}
      <path d="M456 435l67 40v58l-67-40z" fill="#dededc" {...edge} />
      <path d="M456 435l67 40v58" fill="none" stroke="#111" strokeWidth="1.3" />
      {/* front duct */}
      <path d="M444 449l15-6 60 36-14 6z" fill="#cacac6" {...edge} />
      <path d="M504 484l14-5v48l-14 7z" fill="#a3a39e" {...edge} />
      {/* front flange */}
      <path
        d="M437 442l67 40v58l-67-40zM442 452v43l58 36v-45z"
        fill="#dedede"
        fillRule="evenodd"
        stroke="#2e4780"
        strokeWidth=".9"
      />
      <path d="M442 452l58 34v45l-58-36z" fill="#cfcfcc" />
      <path d="M442 452l20 12v21l-20 10z" fill="#96968f" />
      <path d="M462 464l38 22v24l-38-21z" fill="#a9a9a4" />
      <path d="M478 473l22 12v9l-22-12z" fill="#1722e6" />
      <path d="M442 495l36-14 22 13M462 464v24l38 22" fill="none" stroke="#555" strokeWidth=".7" />
      <path d="M437 442l67 40v58l-67-40z" fill="none" stroke="#222" strokeWidth=".8" />
      <path
        d="M442 452l58 34v45l-58-36zM442 452l58 79M442 495l58-14"
        fill="none"
        stroke="#1c53b0"
        strokeWidth=".9"
      />
      <path
        d="M441 442v58M444 451l28 12M470 456v22M466 462h9M467 467h7M467 457v13M499 477v54M505 490v48M502 514h9M444 501l18-9M506 489l6 4"
        stroke="#1c53b0"
        strokeWidth="1"
      />
      <path d="M505 501v12M466 471h7" stroke="white" strokeWidth="4" />
      <path d="M506 502v10M443 497l9 5" stroke="#1c53b0" strokeWidth="1.5" strokeDasharray="2 1" />
      <path d="M470 491l54-20M442 499l42-15" stroke="#3b6bc5" strokeWidth=".8" strokeDasharray="7 3" />
      {/* actuator */}
      <path d="M524 487l8-3 8 4v20l-7 4-9-3z" fill="#f08a10" stroke="#5c3508" strokeWidth=".8" />
      <path d="M528 489l4-4 7 3v20l-6 4-5-3z" fill="#f99a1c" stroke="#8a4b06" strokeWidth=".6" />
      <circle cx="534" cy="492" r="1.500" fill="none" stroke="#5c3508" strokeWidth=".7" />
      <path d="M527 510v5M533 512v2" stroke="#111" strokeWidth="3" />
      {/* connector axes at the far end */}
      <path d="M816 298l61 36M812 300v47M815 294v8M877 331v8" stroke="#d22b3b" strokeWidth=".9" />
      <path d="M818 300v49M812 347l64 38" stroke="#2a8a35" strokeWidth=".8" />
      <path d="M809 312v11" stroke="white" strokeWidth="5" />
      <path d="M809 313v9M847 311l12 6" stroke="#26357a" strokeWidth="1.6" strokeDasharray="2 1" />
      <circle cx="861" cy="340" r="1.500" fill="#1c2f8f" />
      {/* dimension */}
      <path d="M406 562l27 15 96-37" fill="none" stroke="#a9a9e0" strokeWidth=".9" />
      <circle cx="406" cy="562" r="2.500" fill="#7f8cb5" stroke="#56648f" strokeWidth=".7" />
      <circle cx="481" cy="558" r="2.500" fill="#7f8cb5" stroke="#56648f" strokeWidth=".7" />
      <text x="414" y="562" transform="rotate(24 414 562)" fontSize="9" fill="#3b4f93">
        250.0
      </text>
    </g>
  );
}

function ViewCube() {
  return (
    <g>
      <ellipse cx="1093" cy="195" rx="26" ry="8" fill="#ececec" />
      <ellipse cx="1091" cy="199" rx="17" ry="8" fill="#d8d8d8" />
      <path d="M1067 161l25-9 24 10-27 10z" fill="#f4f4f4" stroke="#9b9b9b" />
      <path d="M1067 161l22 11v31l-20-12z" fill="#ececec" stroke="#9b9b9b" />
      <path d="M1089 172l27-10-3 30-24 11z" fill="#e6e6e6" stroke="#9b9b9b" />
      <g fill="#777">
        <text x="1080" y="166" transform="rotate(-9 1080 166)" fontSize="7">
          Сверху
        </text>
        <text x="1071" y="178" transform="rotate(28 1071 178)" fontSize="5">
          Слева
        </text>
        <text x="1090" y="190" transform="rotate(-18 1090 190)" fontSize="6">
          Спереди
        </text>
      </g>
    </g>
  );
}

const docs = [
  ['plan', 'ОВ_Механизмы_1 этаж', 120],
  ['plan', 'ОВ_Механизмы_Подвал', 125],
  ['section', 'Вспомогательный верт.', 122],
  ['cube', 'Вид 1', 89],
];

const viewTools = [
  'detail',
  'visual',
  'sunOff',
  'crop',
  'lock',
  'glasses',
  'reveal',
  'screen',
];

function View() {
  return (
    <ViewStyles>
      <DocTabs>
        {docs.map(([icon, label, w]) => (
          <DocTab key={label} $w={w}>
            <Icon name={icon} size={10} />
            <span>{label}</span>
          </DocTab>
        ))}
        <DocTab $w={87} $active>
          <Icon name="cube" size={10} />
          <span>Вид 1</span>
          <Icon name="x" size={9} />
        </DocTab>
        <Arrow />
      </DocTabs>
      <Stage>
        <svg viewBox="184 134 948 556" role="img" aria-label="3D вид">
          <Model />
          <ViewCube />
        </svg>
        <NavBar>
          <svg viewBox="0 0 20 74" aria-hidden="true">
            <g fill="none" stroke="#8d8d8d">
              <circle cx="16" cy="2" r="2" />
              <circle cx="16" cy="72" r="2" />
              <circle cx="9" cy="17" r="6.500" />
              <path d="M6 14h6v6H6zM0 38h20" />
              <path d="M11 18h7v7h-7z" fill="#78aee0" stroke="#4a7fb5" />
              <path d="M4 43h9v8H4z" fill="#a3cc96" stroke="#6f9a63" />
              <circle cx="12" cy="50" r="3" fill="white" stroke="#666" />
              <path d="M14 52l3 3" stroke="#666" />
            </g>
            <path d="M7 32h4l-2 2zM7 61h4l-2 2z" fill="#888" />
          </svg>
        </NavBar>
        <VScroll>
          <Arrow $turn={180} />
          <Thumb $w={10} />
          <Arrow />
        </VScroll>
      </Stage>
      <ViewBar>
        <span>1 : 20</span>
        {viewTools.map((name) => (
          <ViewTool key={name} aria-label={name}>
            <Icon name={name} size={11} />
          </ViewTool>
        ))}
        <ScrollRow $fill>
          <Arrow $turn={90} />
          <Thumb $w={10} />
          <Arrow $turn={-90} />
        </ScrollRow>
      </ViewBar>
    </ViewStyles>
  );
}

/* Properties */
const PropsStyles = styled.aside`
  background: white;
  border-left: 2px solid #b9b9b9;
  display: flex;
  flex: none;
  flex-direction: column;
  overflow: hidden;
  width: 135px;
  > header {
    background: #f0f0f0;
    height: 64px;
    line-height: 19px;
    padding-left: 2px;
  }
  > footer {
    align-items: center;
    background: #f0f0f0;
    border-top: 1px solid #ddd;
    display: flex;
    height: 17px;
    justify-content: space-between;
    margin-top: auto;
    padding-left: 2px;
    white-space: nowrap;
  }
  a {
    color: #1c5fb4;
  }
`;

const Preview = styled.div`
  background: linear-gradient(#f4f4f4, #e7e7e7);
  border: 1px solid #dadada;
  color: #8b8b8b;
  font: 900 38px/36px Roboto, sans-serif;
  height: 44px;
  margin-left: 2px;
  padding-left: 9px;
  width: 44px;
`;

const TypeRow = styled.div`
  align-items: center;
  background: #f0f0f0;
  color: #9c9c9c;
  display: flex;
  gap: 4px;
  height: 17px;
  padding-left: 1px;
  white-space: nowrap;
`;

const TypeSelect = styled.label`
  align-items: center;
  border: 1px solid #6f6f6f;
  display: flex;
  height: 15px;
  padding-right: 3px;
  width: 72px;
  select {
    appearance: none;
    background: none;
    border: 0;
    color: #222;
    flex: 1;
    min-width: 0;
    overflow: hidden;
    padding-left: 1px;
  }
`;

const PropTable = styled.table`
  border-collapse: separate;
  border-spacing: 0;
  table-layout: fixed;
  width: 100%;
  th,
  td {
    border-bottom: 1px dashed #d4d4d4;
    font-weight: 400;
    height: 12px;
    line-height: 11px;
    overflow: hidden;
    padding: 0;
    text-align: left;
    white-space: nowrap;
  }
  td {
    border-left: 1px dashed #cfcfcf;
    padding-left: 1px;
  }
  th {
    padding-left: 6px;
  }
`;

const GroupHead = styled.tr`
  background: #dedede;
  th {
    border-bottom: 0;
    height: 13px;
    line-height: 13px;
    padding-left: 2px;
  }
`;

const PropRow = styled.tr`
  color: ${(props) => (props.$dim ? '#858585' : '#222')};
  td {
    box-shadow: ${(props) => (props.$boxed ? 'inset 1px 1px 0 #333, inset 0 -1px 0 #333' : 'none')};
  }
  input {
    appearance: none;
    background: #eee;
    border: 1px solid #999;
    display: block;
    height: 9px;
    margin-left: 1px;
    width: 9px;
  }
`;

const ApplyButton = styled.button`
  background: #f4f4f4;
  border: 1px solid #b5b5b5;
  border-right: 0;
  color: #777;
  height: 15px;
  padding-left: 2px;
  text-align: left;
  width: 36px;
`;

const groups = [
  {
    title: 'Размеры',
    rows: [
      ['Форма', 'Прямоугольни'],
      ['Высота', '315.0', true],
      ['Ширина', '570.0', true],
      ['Диаметр', '609.6', true],
    ],
  },
  {
    title: 'Механизмы',
    rows: [
      ['Коэффициент ...', '0.000000', true],
      ['Коэффициент ...', '0.000000', true],
      ['Конфигурация...', 'Расчетный'],
      ['Направление ...', 'Двустороннее'],
      ['Классификаци...', 'Глобальный'],
      ['Метод опреде...', 'Не задано'],
    ],
  },
  {
    title: 'Механизмы - Расход',
    rows: [
      ['Падение давле...', '0.00 Па', true],
      ['Расход', '0.0000 м³/ч', true],
    ],
  },
  {
    title: 'Идентификация',
    rows: [
      ['Инженерная с...', null],
      ['Описание соед...', ''],
    ],
  },
];

const PropCol = styled.col`
  width: ${(props) => props.$w};
`;

function Properties() {
  return (
    <PropsStyles>
      <header>
        Свойства
        <Preview>R</Preview>
      </header>
      <TypeRow>
        <TypeSelect>
          <select aria-label="Тип">
            <option>Соединительнь</option>
          </select>
          <Arrow />
        </TypeSelect>
        <Icon name="types" size={11} />
        Изменить т
      </TypeRow>
      <PropTable>
        <colgroup>
          <PropCol $w="52%" />
          <PropCol $w="48%" />
        </colgroup>
        <tbody>
          {groups.map((group) => (
            <React.Fragment key={group.title}>
              <GroupHead>
                <th colSpan="2">{group.title}</th>
              </GroupHead>
              {group.rows.map(([label, value, dim], i) => (
                <PropRow key={i} $dim={dim} $boxed={label === 'Форма'}>
                  <th scope="row">{label}</th>
                  <td>{value === null ? <input type="checkbox" aria-label={label} /> : value}</td>
                </PropRow>
              ))}
            </React.Fragment>
          ))}
        </tbody>
      </PropTable>
      <footer>
        <a href="#help">Справка по свойствам</a>
        <ApplyButton>Примени</ApplyButton>
      </footer>
    </PropsStyles>
  );
}

/* Overlays */
const Tooltip = styled.div`
  background: linear-gradient(white, #e4e5f0);
  border: 1px solid #8c8c8c;
  box-shadow: 2px 2px 3px rgba(0, 0, 0, 0.4);
  color: #4c4c4c;
  font-weight: 600;
  height: 52px;
  line-height: 10px;
  position: absolute;
  right: 90px;
  top: 317px;
  white-space: nowrap;
  width: 123px;
  p {
    margin: 0;
    padding: 5px;
  }
  p + p {
    border-top: 1px solid #c4c4c4;
  }
`;

const Cursor = styled.div`
  position: absolute;
  right: 56px;
  top: 301px;
`;

const PikMark = styled.div`
  left: 14px;
  opacity: 0.75;
  pointer-events: none;
  position: absolute;
  top: 28px;
  svg {
    display: block;
    height: 106px;
    width: 290px;
  }
`;

const VysMark = styled.div`
  color: #87947d;
  pointer-events: none;
  position: absolute;
  right: 8px;
  top: 38px;
  width: 128px;
  svg {
    display: block;
    height: 50px;
    margin: 0 auto;
    width: 60px;
  }
  strong {
    display: block;
    font: 700 28px/28px 'Liberation Sans Narrow', 'Open Sans Condensed', 'Roboto Condensed',
      'Liberation Sans', sans-serif;
    margin-top: 6px;
    text-align: center;
    -webkit-text-stroke: 1px #87947d;
  }
  p {
    display: flex;
    font-size: 7px;
    justify-content: space-between;
    line-height: 8px;
    margin: 6px 7px 0 5px;
  }
`;

const Credits = styled.div`
  bottom: ${(props) => props.$bottom}px;
  color: ${(props) => (props.$right ? '#808080' : '#a0a0a0')};
  font-family: Lato, 'Open Sans', sans-serif;
  font-size: 18px;
  font-weight: ${(props) => (props.$right ? 300 : 400)};
  left: ${(props) => (props.$right ? 'auto' : '178px')};
  line-height: 26px;
  pointer-events: none;
  position: absolute;
  right: ${(props) => (props.$right ? '153px' : 'auto')};
  text-align: ${(props) => (props.$right ? 'right' : 'left')};
  white-space: nowrap;
  p {
    margin: 0;
  }
  p + p {
    margin-top: ${(props) => (props.$right ? 6 : 0)}px;
  }
  .dark {
    color: #5f5f5f;
    font-weight: 400;
  }
  .course {
    font-size: 19px;
    margin-bottom: 10px;
  }
`;

const StatusBar = styled.footer`
  align-items: center;
  background: var(--grey);
  border-top: 1px solid #b5b5b5;
  display: flex;
  height: 17px;
  padding-right: 29px;
  > span:first-child {
    flex: 1;
    line-height: 20px;
  }
`;

function Marks() {
  return (
    <>
      <PikMark>
        <svg viewBox="14 30 290 106">
          <path d="M14 64v-1l49-27 49 27v10L63 46 20 69v13h-6z" fill="#555" />
          <text
            x="12"
            y="107"
            fontFamily="Inter, sans-serif"
            fontSize="45"
            fontWeight="800"
            fill="#555"
          >
            ПИК
          </text>
          <path d="M14 114h98v19H14z" fill="#555" />
          <text x="21" y="130" fontSize="18" fontWeight="700" fill="white">
            ГРУППА
          </text>
          <path d="M143 33v103" stroke="#444" />
          <text x="151" y="132" fontFamily="Liberation Sans, sans-serif" fontSize="29" fill="#555">
            Академия
          </text>
        </svg>
      </PikMark>
      <VysMark>
        <svg viewBox="1178 39 60 50">
          <path d="M1179 41h58l-29 47z" fill="#dd9087" />
          <path d="M1179 41h58l-20 4-21 23z" fill="#dfa98f" />
          <path d="M1188 45h9l11 18 12-18h9l-21 33z" fill="#f7f4e8" />
          <path d="M1203 54l14-9h3l-12 18z" fill="#cf8673" />
        </svg>
        <strong>VYSOTSKIY</strong>
        <p>
          {'CONSULTING'.split('').map((letter, i) => (
            <span key={i}>{letter}</span>
          ))}
        </p>
      </VysMark>
      <Credits $bottom={26}>
        <p className="dark">ПИК-Академия</p>
        <p>www.bimteam.ru/academy</p>
        <p className="dark">Vysotskiy Consulting</p>
        <p>www.bim.vc</p>
      </Credits>
      <Credits $right $bottom={36}>
        <p className="dark course">Видеокурс: "Autodesk Revit MEP: Продвинутый уровень"</p>
        <p>Блок: "Проектирование вентиляции"</p>
        <p>Урок: "Свойства коннекторов для расчета систем"</p>
      </Credits>
    </>
  );
}

export default function App() {
  return (
    <PageStyles>
      <GlobalStyles />
      <Title />
      <Ribbon />
      <Workspace>
        <Browser />
        <View />
        <Properties />
      </Workspace>
      <StatusBar>
        <span>лчок - выбор, TAB - варианты, CTRL - добавление, SHIFT - снятие выбора.</span>
        {['selLinks', 'selUnder', 'selPin', 'selFace', 'drag', 'gear'].map((name) => (
          <ToolButton key={name} $w={18} aria-label={name}>
            <Icon name={name} size={11} />
          </ToolButton>
        ))}
        <Icon name="filter" size={10} />
        <span>:1</span>
      </StatusBar>
      <Tooltip role="tooltip">
        <p>Конфигурация потока</p>
        <p>
          Нажмите F1 для получения
          <br />
          дополнительной справки
        </p>
      </Tooltip>
      <Cursor>
        <Icon name="pointer" size={15} />
      </Cursor>
      <Marks />
    </PageStyles>
  );
}
